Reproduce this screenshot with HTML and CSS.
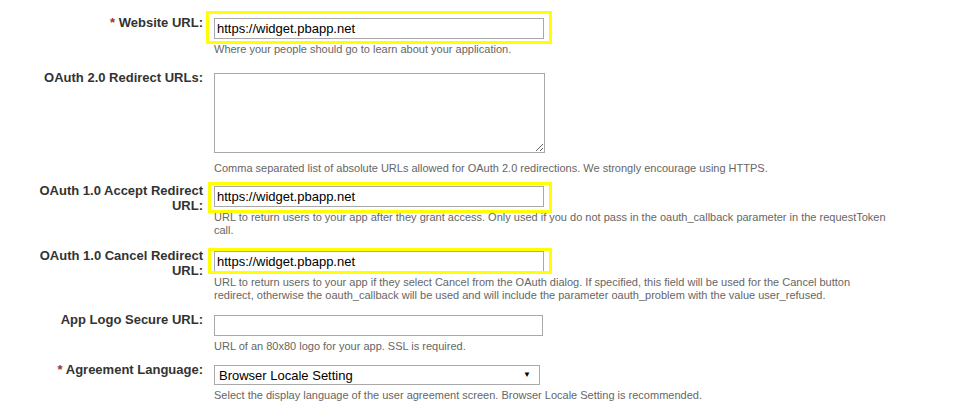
FILE: index.html
```html
<!DOCTYPE html>
<html lang="en">
<head>
<meta charset="utf-8">
<title>Application settings</title>
<link rel="stylesheet" href="styles.css">
</head>
<body>
<form class="settings">
  <div class="row row-website">
    <label class="label" for="website"><span class="req">*</span> Website URL:</label>
    <div class="field">
      <span class="mark mark-website"><input class="text" id="website" type="text" value="https://widget.pbapp.net"></span>
      <p class="help">Where your people should go to learn about your application.</p>
    </div>
  </div>

  <div class="row row-area">
    <label class="label" for="oauth2">OAuth 2.0 Redirect URLs:</label>
    <div class="field">
      <textarea class="area" id="oauth2"></textarea>
      <p class="help help-area">Comma separated list of absolute URLs allowed for OAuth 2.0 redirections. We strongly encourage using HTTPS.</p>
    </div>
  </div>

  <div class="row row-accept">
    <label class="label label-two" for="accept">OAuth 1.0 Accept Redirect URL:</label>
    <div class="field">
      <span class="mark mark-accept"><input class="text" id="accept" type="text" value="https://widget.pbapp.net"></span>
      <p class="help">URL to return users to your app after they grant access. Only used if you do not pass in the oauth_callback parameter in the requestToken call.</p>
    </div>
  </div>

  <div class="row">
    <label class="label label-two" for="cancel">OAuth 1.0 Cancel Redirect URL:</label>
    <div class="field">
      <span class="mark mark-cancel"><input class="text" id="cancel" type="text" value="https://widget.pbapp.net"></span>
      <p class="help">URL to return users to your app if they select Cancel from the OAuth dialog. If specified, this field will be used for the Cancel button redirect, otherwise the oauth_callback will be used and will include the parameter oauth_problem with the value user_refused.</p>
    </div>
  </div>

  <div class="row row-logo">
    <label class="label" for="logo">App Logo Secure URL:</label>
    <div class="field">
      <input class="text text-logo" id="logo" type="text" value="">
      <p class="help">URL of an 80x80 logo for your app. SSL is required.</p>
    </div>
  </div>

  <div class="row">
    <label class="label" for="lang"><span class="req">*</span> Agreement Language:</label>
    <div class="field">
      <span class="select-wrap">
        <select class="select" id="lang">
          <option>Browser Locale Setting</option>
        </select>
      </span>
      <p class="help help-select">Select the display language of the user agreement screen. Browser Locale Setting is recommended.</p>
    </div>
  </div>
</form>
</body>
</html>
```

FILE: styles.css
```css
html, body {
  margin: 0;
  padding: 0;
  background: #ffffff;
}

body {
  font-family: "Liberation Sans", Arial, sans-serif;
  color: #333333;
}

.settings {
  padding-top: 15px;
  display: flex;
  flex-direction: column;
}

.row {
  display: grid;
  grid-template-columns: 203px 676px;
  column-gap: 11px;
  padding-bottom: 10px;
}

.row-website {
  padding-bottom: 14px;
}

.row-area {
  padding-bottom: 8px;
}

.row-accept {
  padding-bottom: 11px;
}

.row-logo {
  padding-bottom: 9px;
}

.label {
  font-size: 13px;
  font-weight: bold;
  line-height: 15px;
  text-align: right;
  color: #333333;
}

.label-two {
  padding-left: 20px;
}

.req {
  color: #a0332b;
}

.field {
  padding-top: 3px;
}

.text {
  display: block;
  box-sizing: border-box;
  width: 330px;
  height: 21px;
  margin: 0;
  padding: 1px 2px;
  border: 1px solid #a9a9a9;
  border-radius: 0;
  background: #ffffff;
  font-family: "Liberation Sans", Arial, sans-serif;
  font-size: 13px;
  color: #000000;
}

.text-logo {
  width: 329px;
}

/* yellow annotation frame drawn over the field */
.mark {
  position: relative;
  display: block;
  width: 330px;
}

.mark::after {
  content: "";
  position: absolute;
  border: 3px solid #ffff00;
  pointer-events: none;
}

.mark-website::after {
  top: -7px;
  bottom: -5px;
  left: -8px;
  right: -8px;
}

.mark-accept::after {
  top: -4px;
  bottom: -6px;
  left: -6px;
  right: -8px;
}

.mark-cancel::after {
  top: -3px;
  bottom: -2px;
  left: -6px;
  right: -8px;
}

.area {
  display: block;
  box-sizing: border-box;
  width: 331px;
  height: 80px;
  margin: 0;
  border: 1px solid #a9a9a9;
  border-radius: 0;
  background: #ffffff;
  font-family: "Liberation Sans", Arial, sans-serif;
  font-size: 13px;
}

.help {
  margin: 4px 0 0 0;
  font-size: 11px;
  line-height: 13px;
  color: #666666;
}

.help-area {
  margin-top: 9px;
}

.help-select {
  margin-top: 4px;
}

.select-wrap {
  position: relative;
  display: block;
  width: 326px;
}

.select-wrap::after {
  content: "\25BC";
  position: absolute;
  right: 9px;
  top: 5px;
  font-size: 8px;
  line-height: 10px;
  color: #000000;
  pointer-events: none;
}

.select {
  display: block;
  box-sizing: border-box;
  width: 326px;
  height: 20px;
  margin: 0;
  padding: 0 0 0 4px;
  border: 1px solid #a9a9a9;
  border-radius: 0;
  background: #ffffff;
  -webkit-appearance: none;
  appearance: none;
  font-family: "Liberation Sans", Arial, sans-serif;
  font-size: 13px;
  color: #000000;
}
```
